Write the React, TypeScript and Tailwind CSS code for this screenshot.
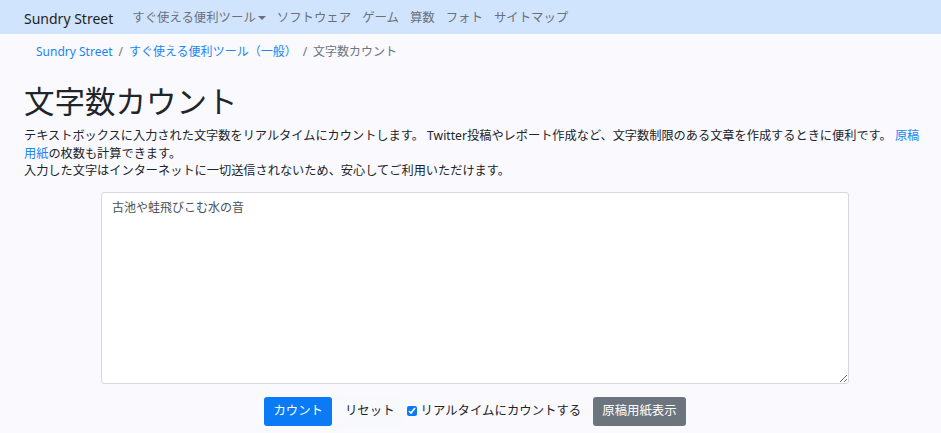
import React, { useState } from 'react';

const font = { fontFamily: '"Noto Sans", "Noto Sans CJK JP", sans-serif' };

const navItems = ['ソフトウェア', 'ゲーム', '算数', 'フォト', 'サイトマップ'];

export default function App() {
  const [text, setText] = useState('古池や蛙飛びこむ水の音');
  const [realtime, setRealtime] = useState(true);

  return (
    <div className="min-h-[433px] bg-[#f9f9fe] text-[#212529]" style={font}>
      {/* Navbar */}
      <nav className="flex h-[34px] items-center bg-[#d0e4fd] pl-[24px] pt-[3px]">
        <a className="mr-[19px] text-[14px] text-[#1d1f21]">Sundry Street</a>
        <div className="flex items-center gap-[11px] text-[12.4px] text-[#6b7079]">
          <span className="flex items-center">
            すぐ使える便利ツール
            <span className="ml-[2px] inline-block h-0 w-0 border-x-[4px] border-t-[4px] border-x-transparent border-t-[#6b7079]" />
          </span>
          {navItems.map((n) => (
            <span key={n}>{n}</span>
          ))}
        </div>
      </nav>

      {/* Breadcrumb */}
      <div className="flex h-[36px] items-center pl-[36px] text-[12px]">
        <a className="text-[#1a86f2]">Sundry Street</a>
        <span className="px-[6px] text-[#6c757d]">/</span>
        <a className="text-[#1a86f2]">すぐ使える便利ツール（一般）</a>
        <span className="px-[6px] text-[#6c757d]">/</span>
        <span className="text-[#6c757d]">文字数カウント</span>
      </div>

      <main className="px-[24px]">
        <h1 className="mt-[11px] text-[30.5px] leading-[40px] text-[#212529]">文字数カウント</h1>
        <p className="mt-[6px] text-[12.2px] leading-[17.5px] text-[#212529]">
          <span className="whitespace-nowrap">
            テキストボックスに入力された文字数をリアルタイムにカウントします。 Twitter投稿やレポート作成など、文字数制限のある文章を作成するときに便利です。{' '}
            <a className="text-[#1a86f2]">原稿</a>
          </span>
          <br />
          <a className="text-[#1a86f2]">用紙</a>
          の枚数も計算できます。
          <br />
          入力した文字はインターネットに一切送信されないため、安心してご利用いただけます。
        </p>

        <div className="mt-[12px] w-[748px] pl-[77px] box-content">
          <textarea
            value={text}
            onChange={(e) => setText(e.target.value)}
            className="block h-[192px] w-[748px] rounded-[3px] border border-[#d5d8dc] bg-white px-[10px] py-[6px] text-[12px] leading-[18px] text-[#495057] outline-none"
            style={font}
          />
          <div className="mt-[13px] flex items-center justify-center text-[12.4px]">
            <button className="h-[29px] rounded-[3px] bg-[#0b7bf5] px-[9px] text-white">カウント</button>
            <button className="ml-[5px] h-[29px] rounded-[3px] bg-[#f8f9fa] px-[8px] text-[#212529]">リセット</button>
            <label className="ml-[4px] flex items-center gap-[4px] text-[#212529]">
              <input
                type="checkbox"
                checked={realtime}
                onChange={(e) => setRealtime(e.target.checked)}
                className="h-[10px] w-[10px] accent-[#0b7bf5]"
              />
              リアルタイムにカウントする
            </label>
            <button className="ml-[12px] h-[29px] rounded-[3px] bg-[#6c757d] px-[9px] text-white">原稿用紙表示</button>
          </div>
        </div>
      </main>
    </div>
  );
}
